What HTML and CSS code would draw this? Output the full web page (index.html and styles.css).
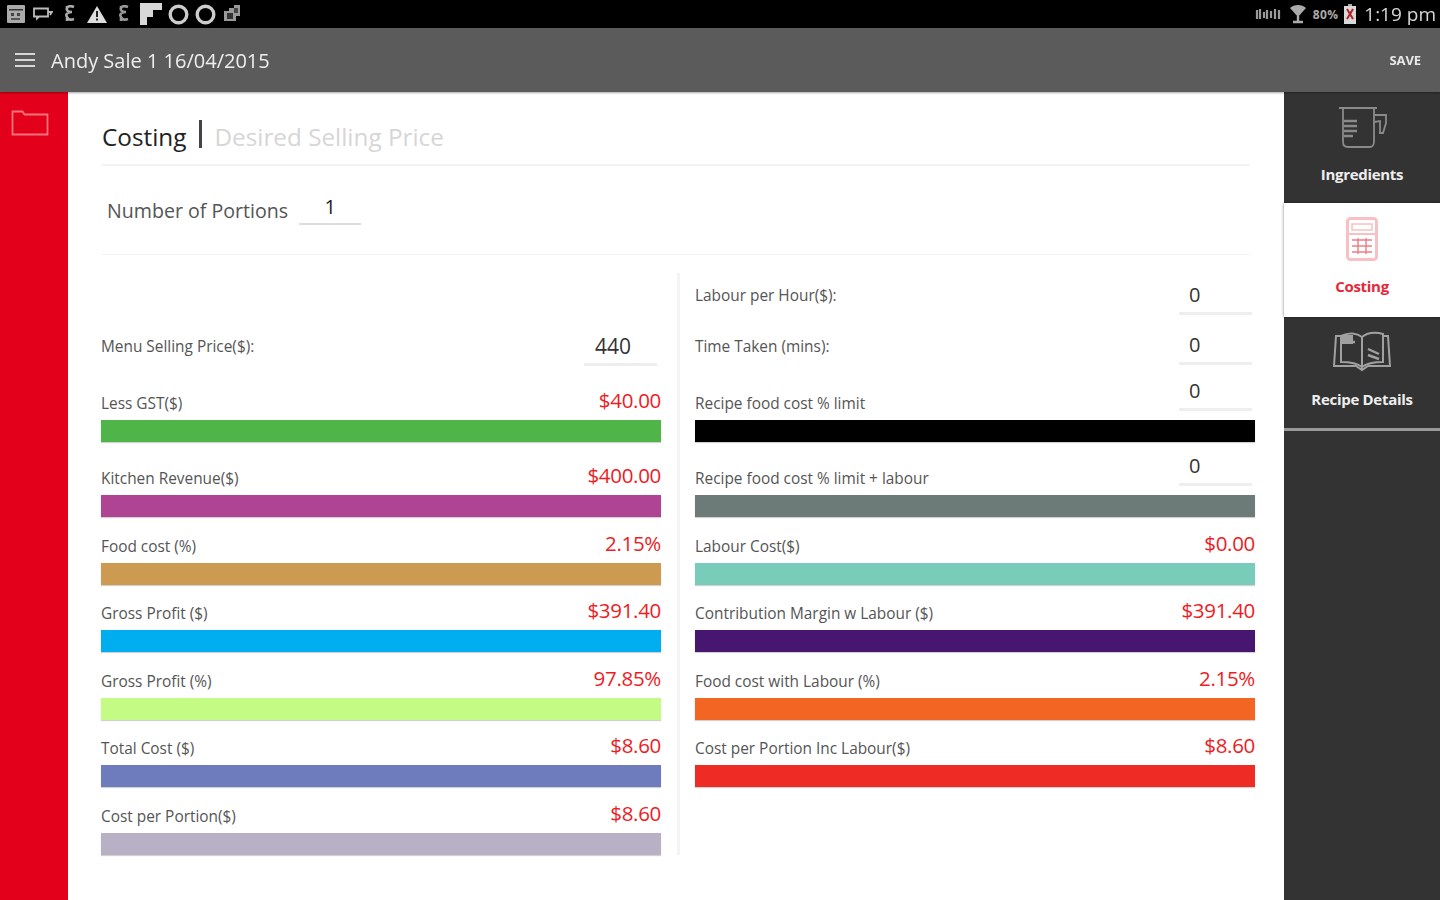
FILE: index.html
```html
<!DOCTYPE html>
<html lang="en">
<head>
<meta charset="utf-8">
<title>Andy Sale 1 16/04/2015</title>
<link rel="stylesheet" href="styles.css">
</head>
<body>
<div class="app">
  <header class="status">
    <div class="status-icons">
      <svg width="20" height="20" viewBox="0 0 20 20"><rect x="1" y="1" width="18" height="18" rx="1" fill="#aaa"/><rect x="3" y="5" width="14" height="1.500" fill="#333"/><rect x="5" y="9" width="3" height="3" fill="#444"/><rect x="11" y="9" width="3" height="3" fill="#444"/><rect x="5" y="14" width="9" height="2" fill="#555"/></svg>
      <svg class="g1" width="20" height="14" viewBox="0 0 20 14"><path d="M1 1.500h14v8H6l-2 2v-2H1zM15 5h4l-2 3" fill="none" stroke="#bbb" stroke-width="1.800"/></svg>
      <svg class="g2" width="12" height="18" viewBox="0 0 12 18"><path d="M10 2C5 0 2 2 3 5c1 2 3 2 5 2-4 0-7 2-5 5 1 3 4 3 7 2M3 1v3M3 13v3" fill="none" stroke="#aaa" stroke-width="2.600"/></svg>
      <svg class="g3" width="20" height="18" viewBox="0 0 20 18"><path d="M10 1 20 18H0z" fill="#ddd"/><rect x="9" y="6" width="2" height="6" fill="#222"/><rect x="9" y="13.500" width="2" height="2" fill="#222"/></svg>
      <svg class="g2" width="12" height="18" viewBox="0 0 12 18"><path d="M10 2C5 0 2 2 3 5c1 2 3 2 5 2-4 0-7 2-5 5 1 3 4 3 7 2M3 1v3M3 13v3" fill="none" stroke="#999" stroke-width="2.600"/></svg>
      <svg class="g4" width="22" height="22" viewBox="0 0 22 22"><path d="M0 0h22v7h-9v7H7v8H0z" fill="#d8d8d8"/></svg>
      <svg class="g5" width="21" height="21" viewBox="0 0 21 21"><circle cx="10.500" cy="10.500" r="8.300" fill="none" stroke="#ccc" stroke-width="3.400"/></svg>
      <svg class="g5" width="21" height="21" viewBox="0 0 21 21"><circle cx="10.500" cy="10.500" r="8.300" fill="none" stroke="#ccc" stroke-width="3.400"/></svg>
      <svg class="g5" width="20" height="20" viewBox="0 0 20 20"><path d="M2 7h5V4h5V1h6v11h-4v5H2z" fill="#999"/><rect x="5" y="9" width="6" height="6" fill="#333"/><rect x="12" y="4" width="4" height="5" fill="#444"/></svg>
    </div>
    <div class="status-right">
      <svg width="28" height="14" viewBox="0 0 28 14"><path d="M2 3v9M5 2v10M9 5v6M12 3v9M16 4v7M20 2v10M24 3v9" stroke="#999" stroke-width="2.200" fill="none"/></svg>
      <svg width="18" height="20" viewBox="0 0 18 20"><path d="M1 4c4-4 12-4 16 0l-8 9z" fill="#aaa"/><path d="M9 12v5M4 18h10" stroke="#aaa" stroke-width="2.400"/></svg>
      <span class="battery-text">80%</span>
      <svg width="12" height="20" viewBox="0 0 12 20"><rect x="4" y="0" width="4" height="2" fill="#aaa"/><rect x="0" y="2" width="12" height="18" fill="#d9d9d9"/><path d="M3 5l6 10M9 5l-6 10" stroke="#b32025" stroke-width="2"/></svg>
      <span class="clock">1:19 pm</span>
    </div>
  </header>
  <nav class="toolbar">
    <div class="burger"><i></i><i></i><i></i></div>
    <h1 class="title">Andy Sale 1 16/04/2015</h1>
    <span class="save">SAVE</span>
  </nav>
  <div class="body">
    <aside class="rail">
      <svg width="38" height="28" viewBox="0 0 38 28"><path d="M1.500 26.500V3.500h10l2 3h23v20z" fill="none" stroke="#f7737d" stroke-width="1.800"/></svg>
    </aside>
    <main class="content">
      <div class="tabs"><span class="tab-on">Costing</span><span class="tab-bar"></span><span class="tab-off">Desired Selling Price</span></div>
      <div class="portions"><span class="portions-label">Number of Portions</span><span class="portions-input">1</span></div>
      <div class="grid">
        <section class="col">
          <div class="spacer"></div>
          <div class="input-row"><span class="label">Menu Selling Price($):</span><span class="field wide">440</span></div>
          <div class="stat first"><div class="head"><span class="label">Less GST($)</span><span class="value">$40.00</span></div><div class="bar c-green"></div></div>
          <div class="stat tall"><div class="head"><span class="label">Kitchen Revenue($)</span><span class="value">$400.00</span></div><div class="bar c-magenta"></div></div>
          <div class="stat"><div class="head"><span class="label">Food cost (%)</span><span class="value">2.15%</span></div><div class="bar c-tan"></div></div>
          <div class="stat"><div class="head"><span class="label">Gross Profit ($)</span><span class="value">$391.40</span></div><div class="bar c-blue"></div></div>
          <div class="stat"><div class="head"><span class="label">Gross Profit (%)</span><span class="value">97.85%</span></div><div class="bar c-lime"></div></div>
          <div class="stat"><div class="head"><span class="label">Total Cost ($)</span><span class="value">$8.60</span></div><div class="bar c-indigo"></div></div>
          <div class="stat"><div class="head"><span class="label">Cost per Portion($)</span><span class="value">$8.60</span></div><div class="bar c-mauve"></div></div>
        </section>
        <section class="col col-right">
          <div class="input-row top"><span class="label">Labour per Hour($):</span><span class="field">0</span></div>
          <div class="input-row second"><span class="label">Time Taken (mins):</span><span class="field">0</span></div>
          <div class="stat first"><div class="head"><span class="label">Recipe food cost % limit</span><span class="field raised">0</span></div><div class="bar c-black"></div></div>
          <div class="stat tall"><div class="head"><span class="label">Recipe food cost % limit + labour</span><span class="field raised">0</span></div><div class="bar c-slate"></div></div>
          <div class="stat"><div class="head"><span class="label">Labour Cost($)</span><span class="value">$0.00</span></div><div class="bar c-teal"></div></div>
          <div class="stat"><div class="head"><span class="label">Contribution Margin w Labour ($)</span><span class="value">$391.40</span></div><div class="bar c-purple"></div></div>
          <div class="stat"><div class="head"><span class="label">Food cost with Labour (%)</span><span class="value">2.15%</span></div><div class="bar c-orange"></div></div>
          <div class="stat"><div class="head"><span class="label">Cost per Portion Inc Labour($)</span><span class="value">$8.60</span></div><div class="bar c-red"></div></div>
        </section>
      </div>
    </main>
    <aside class="side">
      <div class="side-item">
        <svg width="50" height="44" viewBox="0 0 50 44" fill="none" stroke="#8a8a8a" stroke-width="1.800"><path d="M2 2h38M6 2v34c0 3 2 5 5 5h22c2 0 4-2 4-5V2"/><path d="M37 9h12v8l-3 10h-3V15l-6 1"/><path d="M7 15h13M7 20h13M7 25h13M7 30h9" stroke-width="2.400"/></svg>
        <span>Ingredients</span>
      </div>
      <div class="side-item active">
        <svg width="32" height="44" viewBox="0 0 32 44" fill="none" stroke="#f8c0c4" stroke-width="3"><rect x="1.500" y="1.500" width="29" height="41" rx="3"/><rect x="6" y="7" width="20" height="6" stroke-width="1.500"/><path d="M3 17h26" stroke-width="2"/><path d="M6 23h20M6 29h20M6 35h20M12 21v16M20 21v16" stroke="#ee7d84" stroke-width="1.400"/></svg>
        <span>Costing</span>
      </div>
      <div class="side-item last">
        <svg width="58" height="42" viewBox="0 0 58 42" fill="none" stroke="#a0a0a0" stroke-width="2"><path d="M8 5H3L1 35h22l6 4 6-4h22L55 5h-5"/><path d="M8 31V5c8-4 16-3 21 1v30c-5-4-13-5-21-5zM50 31V3c-8-2-16-1-21 3v30c5-4 13-5 21-5z"/><path d="M12 11h10M35 18l11 5M35 24l11 4" stroke-width="2.400"/><rect x="10" y="5" width="9" height="7" fill="#a0a0a0"/></svg>
        <span>Recipe Details</span>
      </div>
    </aside>
  </div>
</div>
</body>
</html>
```
FILE: styles.css
```css
* { box-sizing: border-box; }
html, body { margin: 0; height: 100%; }
body { background: #fff; font-family: "Open Sans", "Noto Sans", sans-serif; overflow: hidden; }
.app { width: 1440px; height: 900px; display: flex; flex-direction: column; filter: blur(0.7px); }

.status { height: 28px; background: #000; display: flex; align-items: center; justify-content: space-between; padding: 0 4px 0 6px; flex: none; }
.status-icons { display: flex; align-items: center; }
.g1 { margin-left: 7px; }
.g2 { margin-left: 11px; }
.g3 { margin-left: 11px; }
.g4 { margin-left: 10px; }
.g5 { margin-left: 6px; }
.status-right { display: flex; align-items: center; gap: 6px; }
.battery-text { color: #aaa; font-size: 12px; font-weight: 700; letter-spacing: 0.3px; }
.clock { color: #d8d8d8; font-size: 19px; margin-left: 2px; }

.toolbar { height: 64px; background: #5b5b5b; display: flex; align-items: center; padding: 0 19px 0 15px; flex: none; box-shadow: 0 1px 2px rgba(0,0,0,.35); position: relative; z-index: 1; }
.burger { width: 20px; display: flex; flex-direction: column; gap: 4px; margin-right: 16px; }
.burger i { display: block; height: 2px; background: #d6d6d6; }
.title { margin: 0; font-size: 20px; font-weight: 400; color: #eee; flex: 1; }
.save { font-size: 13px; font-weight: 700; color: #e8e8e8; letter-spacing: -0.1px; }

.body { flex: 1; display: flex; min-height: 0; }
.rail { width: 68px; background: #e2001a; padding: 16px 0 0 11px; flex: none; }
.content { width: 1216px; flex: none; padding: 0 29px 0 33px; background: #fff; }

.tabs { height: 74px; border-bottom: 2px solid #f3f3f3; display: flex; align-items: center; padding: 16px 0 0 1px; margin-right: 5px; font-size: 24.300px; }
.tab-on { color: #222; }
.tab-bar { width: 3px; height: 28px; background: #444; margin: 0 12px 4px 13px; }
.tab-off { color: #d6d6d6; }

.portions { height: 89px; border-bottom: 1px solid #f3f3f3; display: flex; align-items: flex-start; padding: 31px 0 0 6px; margin-right: 5px; }
.portions-label { font-size: 19.600px; color: #555; line-height: 28px; }
.portions-input { width: 62px; height: 34px; margin: -6px 0 0 11px; border-bottom: 2px solid #ddd; text-align: center; font-size: 20px; color: #222; line-height: 32px; }

.grid { display: grid; grid-template-columns: 579px 575px; margin-top: 18px; }
.col { padding-right: 16px; border-right: 3px solid #f4f4f4; height: 582px; }
.col-right { border-right: 0; padding: 0 0 0 15px; }
.spacer { height: 48px; }

.label { display: block; font-size: 15.400px; color: #555; white-space: nowrap; }
.input-row { display: flex; justify-content: space-between; align-items: center; height: 51px; }
.input-row.top { height: 45px; }
.input-row.second { height: 54px; padding-top: 2px; }
.field { width: 73px; height: 36px; margin-right: 3px; border-bottom: 3px solid #eee; font-size: 20px; color: #333; padding-left: 10px; line-height: 32px; margin-top: 2px; }
.field.wide { font-size: 21px; padding-left: 11px; margin-right: 4px; }
.field.raised { margin-bottom: 3px; }

.stat { height: 67.500px; display: flex; flex-direction: column; justify-content: flex-end; }
.stat.first { height: 70px; }
.stat.tall { height: 75px; }
.head { display: flex; justify-content: space-between; align-items: flex-end; margin-bottom: 6px; }
.value { color: #ee1c25; font-size: 20.500px; line-height: 26px; letter-spacing: -0.3px; padding-bottom: 1px; }
.bar { height: 22px; box-shadow: 0 1px 1px rgba(0,0,0,.18); flex: none; }
.c-green { background: #4fb548; }
.c-magenta { background: #b04494; }
.c-tan { background: #cc9a50; }
.c-blue { background: #00aeef; }
.c-lime { background: #c4fb84; }
.c-indigo { background: #6e7bbd; }
.c-mauve { background: #b8b0c4; }
.c-black { background: #000; }
.c-slate { background: #6c7a78; }
.c-teal { background: #7accba; }
.c-purple { background: #47166f; }
.c-orange { background: #f26522; }
.c-red { background: #ee2b24; }

.side { width: 156px; background: #333; flex: none; }
.side-item { height: 113px; display: flex; flex-direction: column; align-items: center; padding-top: 14px; gap: 14px; color: #eee; font-size: 15px; font-weight: 700; letter-spacing: -0.3px; }
.side-item.active { background: #fff; color: #e4283a; box-shadow: 0 0 3px rgba(0,0,0,.5); height: 114px; margin-top: -2px; gap: 15px; }
.side-item.last { border-bottom: 3px solid #999; height: 114px; gap: 16px; }
```
